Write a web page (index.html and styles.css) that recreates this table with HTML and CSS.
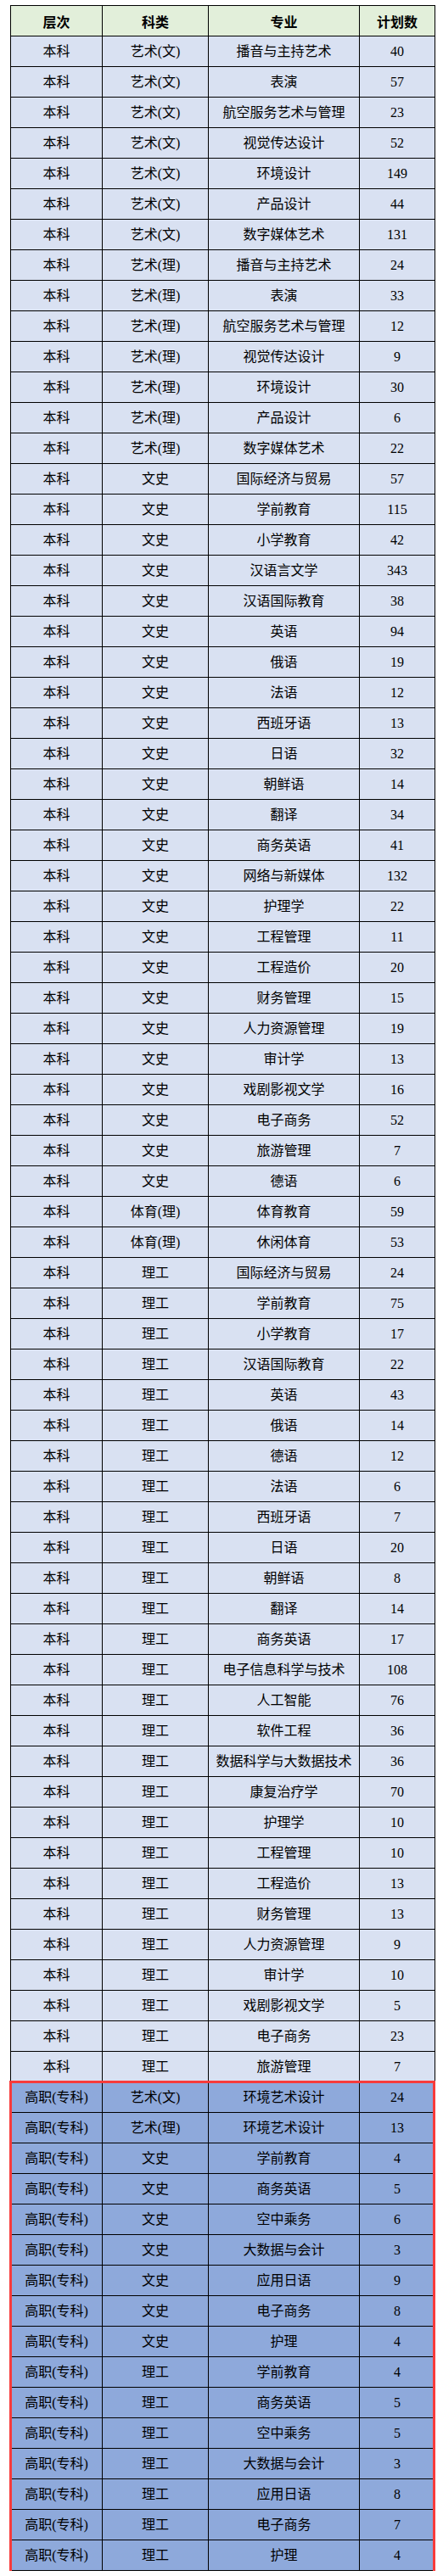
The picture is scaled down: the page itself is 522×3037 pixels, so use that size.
FILE: index.html
```html
<!DOCTYPE html>
<html lang="zh-CN">
<head>
<meta charset="utf-8">
<title>招生计划</title>
<link rel="stylesheet" href="styles.css">
</head>
<body>
<div class="sheet">
<table class="plan">
<colgroup><col class="c1"><col class="c2"><col class="c3"><col class="c4"></colgroup>
<thead>
<tr><th>层次</th><th>科类</th><th>专业</th><th>计划数</th></tr>
</thead>
<tbody class="bk">
<tr><td>本科</td><td>艺术(文)</td><td>播音与主持艺术</td><td>40</td></tr>
<tr><td>本科</td><td>艺术(文)</td><td>表演</td><td>57</td></tr>
<tr><td>本科</td><td>艺术(文)</td><td>航空服务艺术与管理</td><td>23</td></tr>
<tr><td>本科</td><td>艺术(文)</td><td>视觉传达设计</td><td>52</td></tr>
<tr><td>本科</td><td>艺术(文)</td><td>环境设计</td><td>149</td></tr>
<tr><td>本科</td><td>艺术(文)</td><td>产品设计</td><td>44</td></tr>
<tr><td>本科</td><td>艺术(文)</td><td>数字媒体艺术</td><td>131</td></tr>
<tr><td>本科</td><td>艺术(理)</td><td>播音与主持艺术</td><td>24</td></tr>
<tr><td>本科</td><td>艺术(理)</td><td>表演</td><td>33</td></tr>
<tr><td>本科</td><td>艺术(理)</td><td>航空服务艺术与管理</td><td>12</td></tr>
<tr><td>本科</td><td>艺术(理)</td><td>视觉传达设计</td><td>9</td></tr>
<tr><td>本科</td><td>艺术(理)</td><td>环境设计</td><td>30</td></tr>
<tr><td>本科</td><td>艺术(理)</td><td>产品设计</td><td>6</td></tr>
<tr><td>本科</td><td>艺术(理)</td><td>数字媒体艺术</td><td>22</td></tr>
<tr><td>本科</td><td>文史</td><td>国际经济与贸易</td><td>57</td></tr>
<tr><td>本科</td><td>文史</td><td>学前教育</td><td>115</td></tr>
<tr><td>本科</td><td>文史</td><td>小学教育</td><td>42</td></tr>
<tr><td>本科</td><td>文史</td><td>汉语言文学</td><td>343</td></tr>
<tr><td>本科</td><td>文史</td><td>汉语国际教育</td><td>38</td></tr>
<tr><td>本科</td><td>文史</td><td>英语</td><td>94</td></tr>
<tr><td>本科</td><td>文史</td><td>俄语</td><td>19</td></tr>
<tr><td>本科</td><td>文史</td><td>法语</td><td>12</td></tr>
<tr><td>本科</td><td>文史</td><td>西班牙语</td><td>13</td></tr>
<tr><td>本科</td><td>文史</td><td>日语</td><td>32</td></tr>
<tr><td>本科</td><td>文史</td><td>朝鲜语</td><td>14</td></tr>
<tr><td>本科</td><td>文史</td><td>翻译</td><td>34</td></tr>
<tr><td>本科</td><td>文史</td><td>商务英语</td><td>41</td></tr>
<tr><td>本科</td><td>文史</td><td>网络与新媒体</td><td>132</td></tr>
<tr><td>本科</td><td>文史</td><td>护理学</td><td>22</td></tr>
<tr><td>本科</td><td>文史</td><td>工程管理</td><td>11</td></tr>
<tr><td>本科</td><td>文史</td><td>工程造价</td><td>20</td></tr>
<tr><td>本科</td><td>文史</td><td>财务管理</td><td>15</td></tr>
<tr><td>本科</td><td>文史</td><td>人力资源管理</td><td>19</td></tr>
<tr><td>本科</td><td>文史</td><td>审计学</td><td>13</td></tr>
<tr><td>本科</td><td>文史</td><td>戏剧影视文学</td><td>16</td></tr>
<tr><td>本科</td><td>文史</td><td>电子商务</td><td>52</td></tr>
<tr><td>本科</td><td>文史</td><td>旅游管理</td><td>7</td></tr>
<tr><td>本科</td><td>文史</td><td>德语</td><td>6</td></tr>
<tr><td>本科</td><td>体育(理)</td><td>体育教育</td><td>59</td></tr>
<tr><td>本科</td><td>体育(理)</td><td>休闲体育</td><td>53</td></tr>
<tr><td>本科</td><td>理工</td><td>国际经济与贸易</td><td>24</td></tr>
<tr><td>本科</td><td>理工</td><td>学前教育</td><td>75</td></tr>
<tr><td>本科</td><td>理工</td><td>小学教育</td><td>17</td></tr>
<tr><td>本科</td><td>理工</td><td>汉语国际教育</td><td>22</td></tr>
<tr><td>本科</td><td>理工</td><td>英语</td><td>43</td></tr>
<tr><td>本科</td><td>理工</td><td>俄语</td><td>14</td></tr>
<tr><td>本科</td><td>理工</td><td>德语</td><td>12</td></tr>
<tr><td>本科</td><td>理工</td><td>法语</td><td>6</td></tr>
<tr><td>本科</td><td>理工</td><td>西班牙语</td><td>7</td></tr>
<tr><td>本科</td><td>理工</td><td>日语</td><td>20</td></tr>
<tr><td>本科</td><td>理工</td><td>朝鲜语</td><td>8</td></tr>
<tr><td>本科</td><td>理工</td><td>翻译</td><td>14</td></tr>
<tr><td>本科</td><td>理工</td><td>商务英语</td><td>17</td></tr>
<tr><td>本科</td><td>理工</td><td>电子信息科学与技术</td><td>108</td></tr>
<tr><td>本科</td><td>理工</td><td>人工智能</td><td>76</td></tr>
<tr><td>本科</td><td>理工</td><td>软件工程</td><td>36</td></tr>
<tr><td>本科</td><td>理工</td><td>数据科学与大数据技术</td><td>36</td></tr>
<tr><td>本科</td><td>理工</td><td>康复治疗学</td><td>70</td></tr>
<tr><td>本科</td><td>理工</td><td>护理学</td><td>10</td></tr>
<tr><td>本科</td><td>理工</td><td>工程管理</td><td>10</td></tr>
<tr><td>本科</td><td>理工</td><td>工程造价</td><td>13</td></tr>
<tr><td>本科</td><td>理工</td><td>财务管理</td><td>13</td></tr>
<tr><td>本科</td><td>理工</td><td>人力资源管理</td><td>9</td></tr>
<tr><td>本科</td><td>理工</td><td>审计学</td><td>10</td></tr>
<tr><td>本科</td><td>理工</td><td>戏剧影视文学</td><td>5</td></tr>
<tr><td>本科</td><td>理工</td><td>电子商务</td><td>23</td></tr>
<tr><td>本科</td><td>理工</td><td>旅游管理</td><td>7</td></tr>
</tbody>
<tbody class="gz">
<tr><td>高职(专科)</td><td>艺术(文)</td><td>环境艺术设计</td><td>24</td></tr>
<tr><td>高职(专科)</td><td>艺术(理)</td><td>环境艺术设计</td><td>13</td></tr>
<tr><td>高职(专科)</td><td>文史</td><td>学前教育</td><td>4</td></tr>
<tr><td>高职(专科)</td><td>文史</td><td>商务英语</td><td>5</td></tr>
<tr><td>高职(专科)</td><td>文史</td><td>空中乘务</td><td>6</td></tr>
<tr><td>高职(专科)</td><td>文史</td><td>大数据与会计</td><td>3</td></tr>
<tr><td>高职(专科)</td><td>文史</td><td>应用日语</td><td>9</td></tr>
<tr><td>高职(专科)</td><td>文史</td><td>电子商务</td><td>8</td></tr>
<tr><td>高职(专科)</td><td>文史</td><td>护理</td><td>4</td></tr>
<tr><td>高职(专科)</td><td>理工</td><td>学前教育</td><td>4</td></tr>
<tr><td>高职(专科)</td><td>理工</td><td>商务英语</td><td>5</td></tr>
<tr><td>高职(专科)</td><td>理工</td><td>空中乘务</td><td>5</td></tr>
<tr><td>高职(专科)</td><td>理工</td><td>大数据与会计</td><td>3</td></tr>
<tr><td>高职(专科)</td><td>理工</td><td>应用日语</td><td>8</td></tr>
<tr><td>高职(专科)</td><td>理工</td><td>电子商务</td><td>7</td></tr>
<tr><td>高职(专科)</td><td>理工</td><td>护理</td><td>4</td></tr>
</tbody>
</table>
<div class="frame"></div>
</div>
</body>
</html>
```

FILE: styles.css
```css
html, body {
  margin: 0;
  padding: 0;
  background: #ffffff;
}

body {
  padding: 6px 0 0 12px;
  font-family: "Liberation Serif", "Noto Sans CJK SC", serif;
  color: #000000;
}

.sheet {
  position: relative;
  width: 500px;
}

.plan {
  width: 500px;
  border-collapse: collapse;
  table-layout: fixed;
}

.plan .c1 { width: 108px; }
.plan .c2 { width: 125px; }
.plan .c3 { width: 178px; }
.plan .c4 { width: 89px; }

.plan th,
.plan td {
  border: 1px solid #000000;
  height: 35px;
  padding: 0;
  text-align: center;
  vertical-align: middle;
  font-size: 16px;
  line-height: 20px;
  white-space: nowrap;
}

.plan th {
  background: #e2efda;
  font-family: "Noto Sans CJK SC", sans-serif;
  font-weight: 700;
}

.plan .bk td {
  background: #d9e1f2;
}

.plan .gz td {
  background: #8ea9db;
}

.frame {
  position: absolute;
  left: -1px;
  top: 2447px;
  width: 502px;
  height: 581px;
  border: 3px solid #f73b3b;
  box-sizing: border-box;
  pointer-events: none;
}
```
